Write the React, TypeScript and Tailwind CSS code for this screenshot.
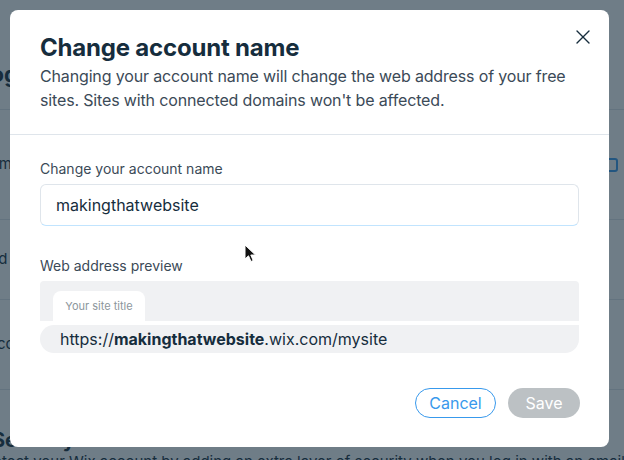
import { X } from "lucide-react";

const font = { fontFamily: "Inter, 'Noto Sans', sans-serif" };

function BackgroundPage() {
  return (
    <div className="ml-[-22px] w-[680px] bg-white text-[#162d3d]">
      <div className="flex h-[110px] items-end border-b border-[#dfe5eb] pb-[18px]">
        <h2 className="text-[22px] font-bold">Login details</h2>
      </div>
      <div className="flex h-[110px] items-center justify-between border-b border-[#dfe5eb] pr-[40px]">
        <span className="ml-[-60px] text-[15px]">Account name</span>
        <span className="h-[14px] w-[14px] rounded-[3px] border-2 border-[#3899ec]" />
      </div>
      <div className="flex h-[80px] items-center border-b border-[#dfe5eb]">
        <span className="ml-[-40px] text-[15px]">Password</span>
      </div>
      <div className="flex h-[90px] items-center border-b border-[#dfe5eb]">
        <span className="text-[15px]">Account email</span>
      </div>
      <div className="pt-[38px]">
        <h3 className="ml-[14px] text-[20px] font-bold leading-[24px]">Security</h3>
        <p className="whitespace-nowrap text-[15px] leading-[20px]">
          Protect your Wix account by adding an extra layer of security when you log in with an email and password
        </p>
      </div>
    </div>
  );
}

function Cursor() {
  return (
    <svg className="absolute left-[244px] top-[244px]" width="14" height="20" viewBox="0 0 14 20">
      <path d="M1 1 L1 15 L4.5 11.8 L7 17.5 L9.2 16.5 L6.8 11 L11.5 11 Z" fill="#111" stroke="#fff" strokeWidth="1" />
    </svg>
  );
}

export default function App() {
  return (
    <div className="relative h-[460px] w-[624px] overflow-hidden" style={font}>
      <BackgroundPage />
      <div className="absolute inset-0 bg-[rgba(22,45,61,0.62)] p-[10px]">
        <div className="relative flex h-[437px] w-[599px] flex-col rounded-[8px] bg-white">
          <button
            type="button"
            className="absolute right-[14px] top-[15px] text-[#162d3d]"
          >
            <X size={24} strokeWidth={1.4} />
          </button>

          <div className="border-b border-[#dfe5eb] px-[30px] pb-[22px] pt-[22px]">
            <h1 className="text-[24px] font-bold leading-[32px] tracking-[-0.2px] text-[#162d3d]">
              Change account name
            </h1>
            <p className="text-[16px] leading-[24px] tracking-[-0.15px] text-[#3b4a57]">
              Changing your account name will change the web address of your free sites. Sites with connected
              domains won't be affected.
            </p>
          </div>

          <div className="px-[30px] pt-[24px]">
            <label className="block text-[14px] leading-[20px] text-[#3b4a57]">Change your account name</label>
            <div className="mt-[5px] flex h-[42px] items-center rounded-[6px] border border-[#dfe5eb] border-b-[#c1e4fe] px-[15px]">
              <span className="text-[16px] text-[#162d3d]">makingthatwebsite</span>
            </div>

            <label className="mt-[30px] block text-[14px] leading-[20px] text-[#3b4a57]">Web address preview</label>
            <div className="mt-[5px]">
              <div className="flex h-[40px] items-end rounded-t-[4px] bg-[#f0f1f3] pl-[13px]">
                <div className="flex h-[30px] w-[92px] items-center justify-center rounded-t-[8px] bg-white">
                  <span className="text-[11px] text-[#8c969c]">Your site title</span>
                </div>
              </div>
              <div className="h-[4px] bg-white" />
              <div className="flex h-[28px] items-center rounded-l-[14px] rounded-br-[14px] bg-[#f0f1f3] pl-[20px]">
                <span className="text-[16px] text-[#162d3d]">
                  https://<span className="font-bold">makingthatwebsite</span>.wix.com/mysite
                </span>
              </div>
            </div>
          </div>

          <div className="mt-auto flex justify-end gap-[12px] px-[29px] pb-[29px]">
            <button
              type="button"
              className="h-[30px] w-[81px] rounded-full border border-[#3899ec] text-[16px] text-[#3899ec]"
            >
              Cancel
            </button>
            <button
              type="button"
              disabled
              className="h-[30px] w-[72px] rounded-full bg-[#bcc1c4] text-[16px] text-white"
            >
              Save
            </button>
          </div>
        </div>
      </div>
      <Cursor />
    </div>
  );
}
